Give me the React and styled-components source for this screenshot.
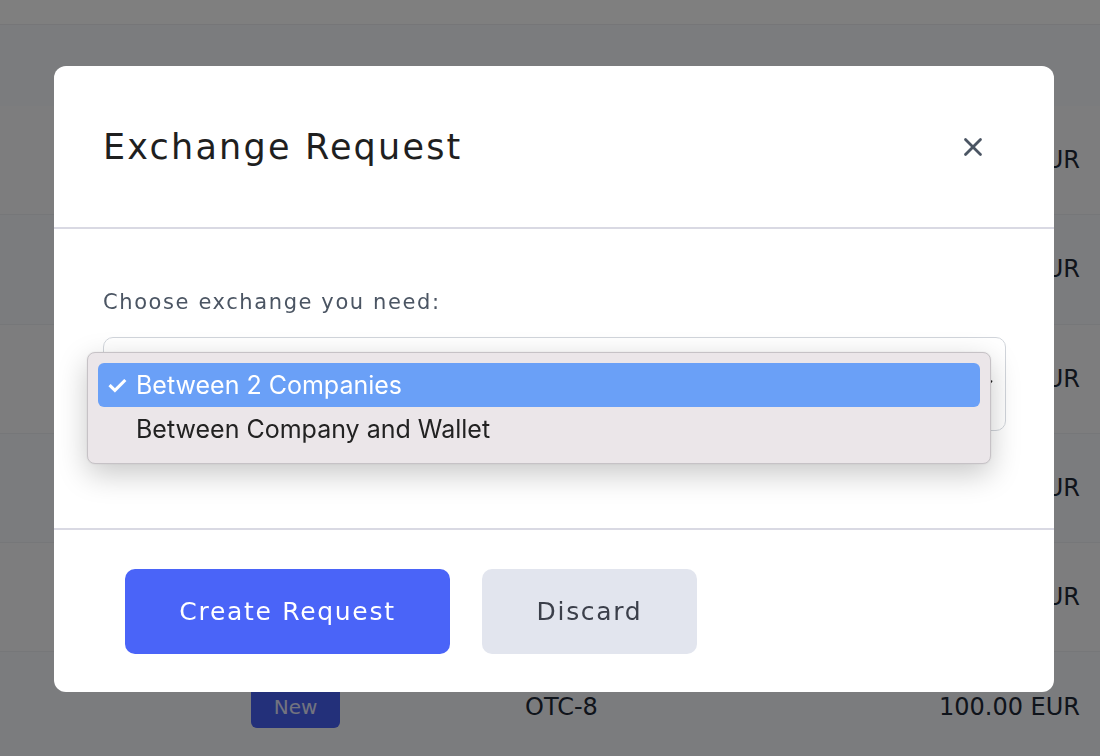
import styled, { createGlobalStyle } from 'styled-components';
import { X, ChevronDown } from 'lucide-react';

const Global = createGlobalStyle`
  html, body { margin: 0; padding: 0; }
  body {
    font-family: 'DejaVu Sans', 'Open Sans', sans-serif;
    background: #f6f8fc;
    overflow: hidden;
  }
`;

const rows = [
  { status: 'New', id: 'OTC-13', amount: '250.00 EUR' },
  { status: 'New', id: 'OTC-12', amount: '120.00 EUR' },
  { status: 'New', id: 'OTC-11', amount: '300.00 EUR' },
  { status: 'New', id: 'OTC-10', amount: '500.00 EUR' },
  { status: 'New', id: 'OTC-9', amount: '150.00 EUR' },
  { status: 'New', id: 'OTC-8', amount: '100.00 EUR' },
];

const App = () => (
  <>
    <Global />
    <Page>
      <TopBar />
      <Table>
        <HeadRow>
          <div>Status</div>
          <div>ID</div>
          <Amount>Amount</Amount>
        </HeadRow>
        {rows.map((r) => (
          <Row key={r.id}>
            <div>
              <Badge>{r.status}</Badge>
            </div>
            <div>{r.id}</div>
            <Amount>{r.amount}</Amount>
          </Row>
        ))}
      </Table>
    </Page>

    <Backdrop>
      <Modal>
        <Header>
          <Title>Exchange Request</Title>
          <Close>
            <X size={30} strokeWidth={2.2} />
          </Close>
        </Header>
        <Body>
          <Label>Choose exchange you need:</Label>
          <SelectWrap>
            <SelectBox>
              <ChevronDown size={22} color="#222" />
            </SelectBox>
            <Menu>
              <Option $active>
                <Check>✓</Check>Between 2 Companies
              </Option>
              <Option>
                <Check />Between Company and Wallet
              </Option>
            </Menu>
          </SelectWrap>
        </Body>
        <Footer>
          <PrimaryButton>Create Request</PrimaryButton>
          <SecondaryButton>Discard</SecondaryButton>
        </Footer>
      </Modal>
    </Backdrop>
  </>
);

const Page = styled.div`
  width: 1100px;
  height: 756px;
  background: #f6f8fc;
  color: #1f2937;
`;

const TopBar = styled.div`
  height: 24px;
  background: #ffffff;
  border-bottom: 1px solid #ecedf1;
`;

const Table = styled.div`
  display: flex;
  flex-direction: column;
`;

const HeadRow = styled.div`
  display: grid;
  grid-template-columns: 274px 1fr auto;
  height: 81px;
  align-items: end;
  padding: 0 62px 0 251px;
  font-size: 22px;
  color: #111827;
`;

const Row = styled.div`
  display: grid;
  grid-template-columns: 274px 1fr auto;
  box-sizing: border-box;
  height: 109.3px;
  align-items: center;
  padding: 0 20px 0 251px;
  border-bottom: 1px solid #eceef3;
  font-size: 24px;
  &:nth-child(2n) { background: #fbfbfd; }
`;

const Amount = styled.div`
  text-align: right;
`;

const Badge = styled.span`
  display: inline-flex;
  align-items: center;
  justify-content: center;
  width: 89px;
  height: 42px;
  border-radius: 6px;
  background: #4660f4;
  color: #e4e7ff;
  font-size: 20px;
`;

const Backdrop = styled.div`
  position: fixed;
  inset: 0;
  background: rgba(0, 0, 0, 0.5);
  display: flex;
  justify-content: center;
  align-items: center;
`;

const Modal = styled.div`
  width: 1000px;
  height: 626px;
  margin-left: 8px;
  margin-top: 2px;
  background: #ffffff;
  border-radius: 12px;
  display: flex;
  flex-direction: column;
`;

const Header = styled.div`
  height: 161px;
  padding: 0 66px 0 49px;
  display: flex;
  align-items: center;
  justify-content: space-between;
  border-bottom: 2px solid #d9d9e3;
`;

const Title = styled.h2`
  margin: 0;
  font-size: 35px;
  font-weight: normal;
  letter-spacing: 2.2px;
  color: #1f1f1f;
`;

const Close = styled.button`
  border: none;
  background: none;
  padding: 0;
  color: #4b5563;
  display: flex;
  cursor: pointer;
`;

const Body = styled.div`
  height: 301px;
  padding: 58px 49px 0;
  box-sizing: border-box;
  border-bottom: 2px solid #d9d9e3;
`;

const Label = styled.div`
  font-size: 21px;
  letter-spacing: 1.6px;
  color: #4b5563;
  line-height: 30px;
  margin-bottom: 20px;
`;

const SelectWrap = styled.div`
  position: relative;
`;

const SelectBox = styled.div`
  height: 94px;
  width: 903px;
  box-sizing: border-box;
  border: 1.5px solid #d1d5db;
  border-radius: 10px;
  display: flex;
  align-items: center;
  justify-content: flex-end;
  padding-right: 8px;
`;

const Menu = styled.div`
  position: absolute;
  top: 15px;
  left: -16px;
  width: 904px;
  box-sizing: border-box;
  padding: 10px 10px 12px;
  background: #ebe6e9;
  border: 1px solid #c6c2c6;
  border-radius: 8px;
  box-shadow: 0 10px 30px rgba(0, 0, 0, 0.22), 0 0 2px rgba(0, 0, 0, 0.1);
  font-family: 'Inter', 'Liberation Sans', sans-serif;
`;

const Option = styled.div`
  height: 44px;
  display: flex;
  align-items: center;
  padding: 0 8px;
  border-radius: 6px;
  font-size: 25px;
  color: ${(p) => (p.$active ? '#ffffff' : '#222222')};
  background: ${(p) => (p.$active ? '#6aa0f7' : 'transparent')};
`;

const Check = styled.span`
  width: 30px;
  font-size: 25px;
  font-weight: 600;
`;

const Footer = styled.div`
  flex: 1;
  display: flex;
  align-items: center;
  gap: 32px;
  padding: 0 71px;
`;

const PrimaryButton = styled.button`
  width: 325px;
  height: 85px;
  border: none;
  border-radius: 10px;
  background: #4a64f8;
  color: #ffffff;
  font-family: inherit;
  font-size: 25px;
  letter-spacing: 1.7px;
  cursor: pointer;
`;

const SecondaryButton = styled(PrimaryButton)`
  width: 215px;
  background: #e2e5ee;
  color: #3b3f4a;
`;

export default App;
